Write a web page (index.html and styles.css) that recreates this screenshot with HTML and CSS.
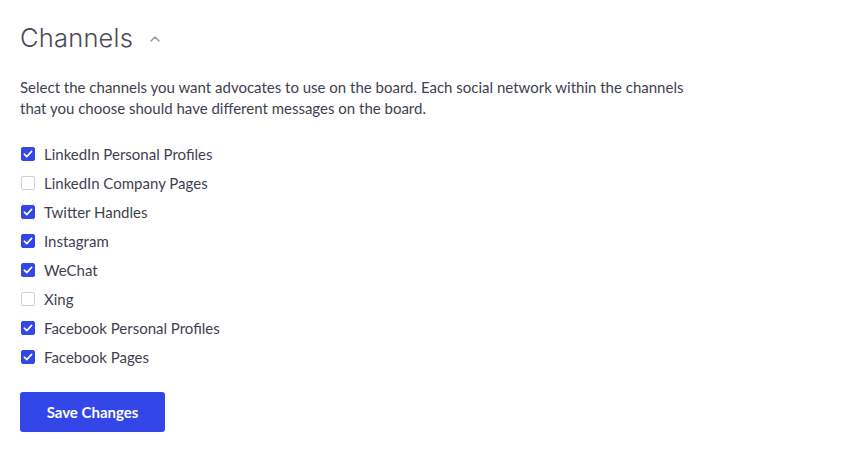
FILE: index.html
```html
<!DOCTYPE html>
<html>
<head>
    <title>Channels</title>
    <meta name="viewport" content="width=device-width, initial-scale=1">
    <link rel="stylesheet" href="styles.css">
</head>
<body>
    <div class="section">
        <h2 class="section-title">Channels
            <svg class="chevron" width="12" height="8" viewBox="0 0 12 8"><path d="M2 6 L6 2 L10 6" fill="none" stroke="#9a9aa6" stroke-width="1.5" stroke-linecap="round" stroke-linejoin="round"/></svg>
        </h2>
        <p class="intro">Select the channels you want advocates to use on the board. Each social network within the channels that you choose should have different messages on the board.</p>
        <ul class="channels">
            <li><label><input type="checkbox" checked><span class="box"></span>LinkedIn Personal Profiles</label></li>
            <li><label><input type="checkbox"><span class="box"></span>LinkedIn Company Pages</label></li>
            <li><label><input type="checkbox" checked><span class="box"></span>Twitter Handles</label></li>
            <li><label><input type="checkbox" checked><span class="box"></span>Instagram</label></li>
            <li><label><input type="checkbox" checked><span class="box"></span>WeChat</label></li>
            <li><label><input type="checkbox"><span class="box"></span>Xing</label></li>
            <li><label><input type="checkbox" checked><span class="box"></span>Facebook Personal Profiles</label></li>
            <li><label><input type="checkbox" checked><span class="box"></span>Facebook Pages</label></li>
        </ul>
        <button class="save">Save Changes</button>
    </div>
</body>
</html>
```

FILE: styles.css
```css
body { margin: 0; font-family: "Lato", "Liberation Sans", sans-serif; color: #3f3f4f; background: #fff; }
.section { padding: 22px 20px; }
.section-title {
    margin: 0 0 24px;
    font-family: "Inter", sans-serif;
    font-weight: 300;
    font-size: 25.5px;
    color: #4a4a5a;
    display: flex;
    align-items: center;
    gap: 16px;
    letter-spacing: 0.2px;
}
.chevron { margin-top: 2px; }
.intro { margin: 0 0 20px; font-size: 15px; line-height: 21px; max-width: 680px; }
.channels { list-style: none; margin: 0 0 21px; padding: 0; }
.channels li { height: 29px; display: flex; align-items: center; }
.channels label { display: flex; align-items: center; font-size: 15px; cursor: pointer; }
.channels input { display: none; }
.box {
    width: 14px;
    height: 14px;
    border: 1px solid #d0d0d6;
    border-radius: 2px;
    margin: 0 9px 0 1px;
    box-sizing: border-box;
    background: #fff;
}
.channels input:checked + .box {
    background: #3347e8 url("data:image/svg+xml,%3Csvg xmlns='http://www.w3.org/2000/svg' viewBox='0 0 14 14'%3E%3Cpath d='M3.3 7.2 L5.8 9.6 L10.6 4.4' fill='none' stroke='white' stroke-width='1.6' stroke-linecap='round' stroke-linejoin='round'/%3E%3C/svg%3E") center/14px no-repeat;
    border-color: #3347e8;
}
.save {
    background: #3347e8;
    color: #fff;
    border: none;
    border-radius: 3px;
    width: 145px;
    height: 40px;
    font-family: "Lato", sans-serif;
    font-weight: 700;
    font-size: 15px;
    cursor: pointer;
}
```
